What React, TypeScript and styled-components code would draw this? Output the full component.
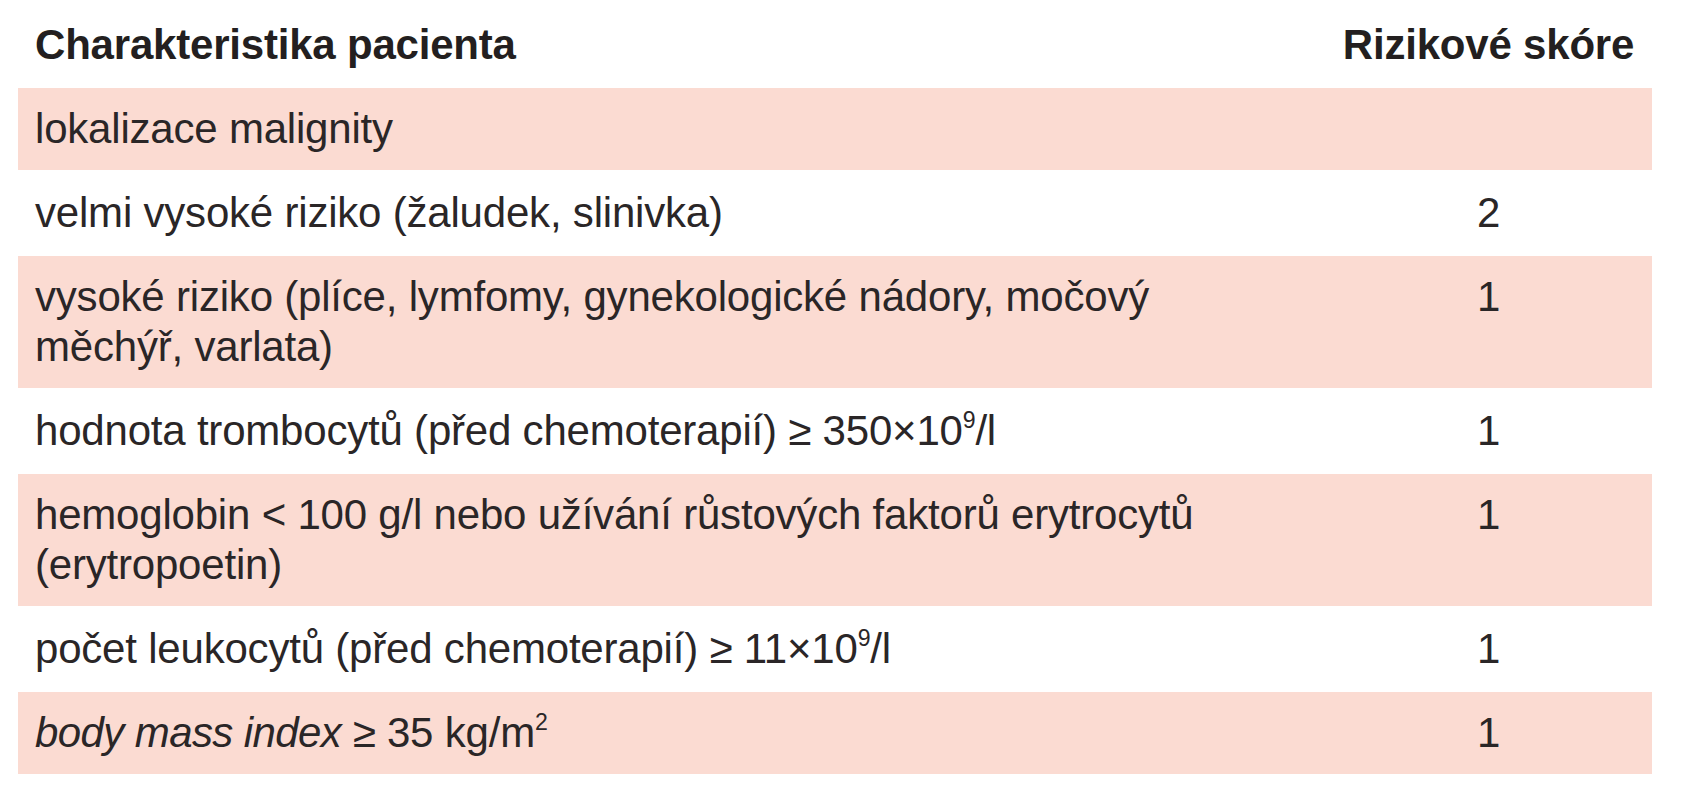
import React from "react";
import styled, { createGlobalStyle } from "styled-components";

const GlobalStyle = createGlobalStyle`
  html, body {
    margin: 0;
    padding: 0;
    background: #ffffff;
  }

  body {
    font-family: "Liberation Sans", Arial, sans-serif;
    color: #2a2627;
  }
`;

const Page = styled.div`
  padding: 0 30px 0 18px;
`;

const Table = styled.div`
  width: 1634px;
  display: grid;
  grid-template-columns: 1fr 327px;
`;

const Row = styled.div<{ $shaded?: boolean }>`
  display: contents;

  & > div {
    background-color: ${({ $shaded }) => ($shaded ? "#fbdbd2" : "#ffffff")};
    border-bottom: 2px solid #ffffff;
  }
`;

const Cell = styled.div`
  padding: 16px 17px;
  font-size: 42px;
  line-height: 50px;
  letter-spacing: -0.2px;
`;

const ScoreCell = styled(Cell)`
  text-align: center;
  padding-left: 0;
  padding-right: 0;
`;

const HeadCell = styled(Cell)<{ $center?: boolean }>`
  padding-top: 20px;
  padding-bottom: 16px;
  font-weight: 700;
  color: #231f20;
  text-align: ${({ $center }) => ($center ? "center" : "left")};
  ${({ $center }) => ($center ? "padding-left: 0; padding-right: 0;" : "")}
`;

const Sup = styled.sup`
  font-size: 0.55em;
  line-height: 0;
  vertical-align: 0.75em;
`;

const Em = styled.em`
  font-style: italic;
  letter-spacing: -0.6px;
`;

type Item = {
  label: React.ReactNode;
  score?: string;
};

const rows: Item[] = [
  { label: "lokalizace malignity" },
  { label: "velmi vysoké riziko (žaludek, slinivka)", score: "2" },
  {
    label: (
      <>
        vysoké riziko (plíce, lymfomy, gynekologické nádory, močový
        <br />
        měchýř, varlata)
      </>
    ),
    score: "1",
  },
  {
    label: (
      <>
        hodnota trombocytů (před chemoterapií) ≥ 350×10<Sup>9</Sup>/l
      </>
    ),
    score: "1",
  },
  {
    label: (
      <>
        hemoglobin &lt; 100 g/l nebo užívání růstových faktorů erytrocytů
        <br />
        (erytropoetin)
      </>
    ),
    score: "1",
  },
  {
    label: (
      <>
        počet leukocytů (před chemoterapií) ≥ 11×10<Sup>9</Sup>/l
      </>
    ),
    score: "1",
  },
  {
    label: (
      <>
        <Em>body mass index</Em> ≥ 35 kg/m<Sup>2</Sup>
      </>
    ),
    score: "1",
  },
];

const App = () => (
  <Page>
    <GlobalStyle />
    <Table>
      <Row>
        <HeadCell>Charakteristika pacienta</HeadCell>
        <HeadCell $center>Rizikové skóre</HeadCell>
      </Row>
      {rows.map((row, i) => (
        <Row key={i} $shaded={i % 2 === 0}>
          <Cell>{row.label}</Cell>
          <ScoreCell>{row.score ?? ""}</ScoreCell>
        </Row>
      ))}
    </Table>
  </Page>
);

export default App;
